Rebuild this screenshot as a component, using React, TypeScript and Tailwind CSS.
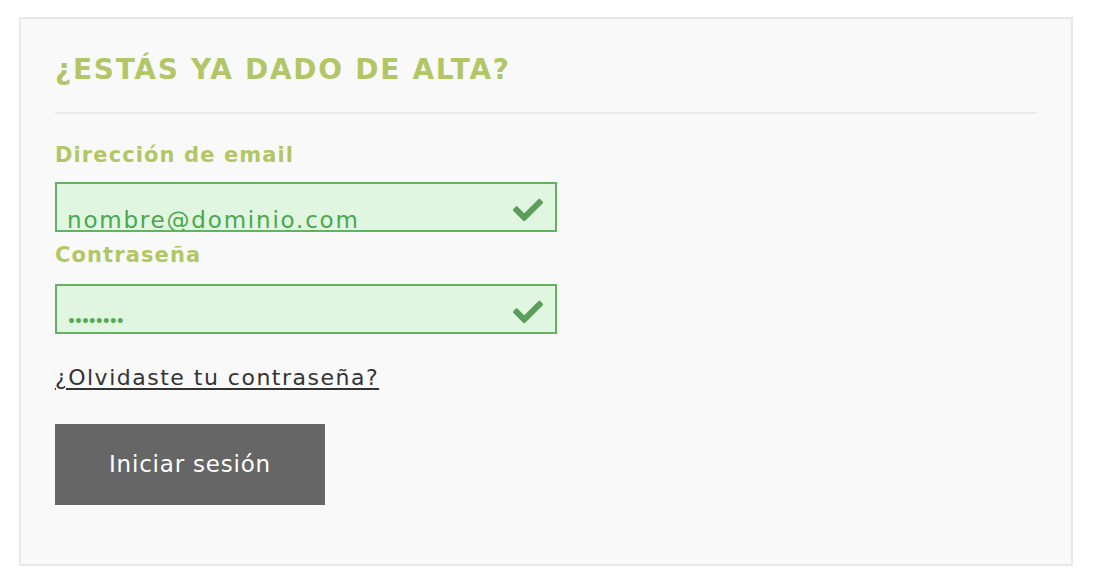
import React from "react";
import { FaCheck } from "react-icons/fa";

const font = { fontFamily: '"DejaVu Sans", "Liberation Sans", sans-serif' };

function Field({ value, small }: { value: string; small?: boolean }) {
  return (
    <div className="relative w-[502px] h-[50px] border-2 border-[#62b262] bg-[#e1f6e1] overflow-hidden">
      <div
        className={
          small
            ? "absolute left-[10px] top-[23px] text-[14px] leading-[24px] text-[#56a956] font-bold tracking-[-2px]"
            : "absolute left-[10px] top-[19px] text-[23px] leading-[34px] text-[#48a84b] tracking-[1.8px]"
        }
      >
        {value}
      </div>
      <FaCheck className="absolute right-[12px] top-[11px] text-[#5a9e5a]" size={30} />
    </div>
  );
}

export default function App() {
  return (
    <div className="w-[1100px] h-[582px] bg-white pt-[17px] pl-[19px]" style={font}>
      <div className="w-[1054px] h-[549px] border-2 border-[#e8e8e8] bg-[#f9f9f9] pl-[34px] pr-[34px] pt-[31px]">
        <h2 className="text-[28px] leading-[40px] font-bold text-[#b3c666] tracking-[1.7px]">¿ESTÁS YA DADO DE ALTA?</h2>
        <div className="mt-[22px] h-[2px] bg-[#e9e9e9] mr-[0px]" />
        <div className="mt-[26px] text-[21px] leading-[30px] font-bold text-[#b3c666] tracking-[1.1px]">Dirección de email</div>
        <div className="mt-[12px]">
          <Field value="nombre@dominio.com" />
        </div>
        <div className="mt-[8px] text-[21px] leading-[30px] font-bold text-[#b3c666] tracking-[1.1px]">Contraseña</div>
        <div className="mt-[14px]">
          <Field value="••••••••" small />
        </div>
        <div className="mt-[29px]">
          <a className="text-[22px] leading-[30px] text-[#333333] underline underline-offset-[3px] decoration-[1.5px] tracking-[1.5px]">¿Olvidaste tu contraseña?</a>
        </div>
        <button className="mt-[31px] w-[270px] h-[81px] bg-[#666666] text-white text-[23px] tracking-[0.8px]">Iniciar sesión</button>
      </div>
    </div>
  );
}
